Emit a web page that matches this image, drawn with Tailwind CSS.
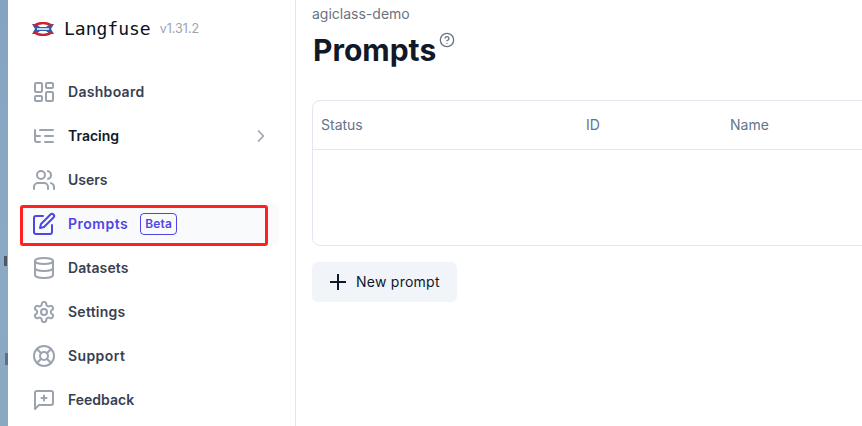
<!DOCTYPE html>
<html><head><meta charset="utf-8"><script src="https://cdn.jsdelivr.net/npm/@tailwindcss/browser@4"></script></head>
<body class="bg-white font-['Inter','Noto_Sans',sans-serif]">
<div class="flex w-[862px] h-[426px] overflow-hidden">
  <div class="relative w-[8px] shrink-0 bg-[linear-gradient(#84a5c2,#8aa9c4_60%,#8ba8c2)]">
    <span class="absolute left-[4px] top-[256px] w-[3px] h-[10px] bg-[#4d5566]"></span>
    <span class="absolute left-[5px] top-[353px] w-[3px] h-[12px] bg-[#5c7186]"></span>
  </div>
  <aside class="relative w-[288px] shrink-0 border-r border-[#e5e7eb] flex flex-col">
    <div class="flex items-center h-[58px] pl-[24px]">
      <svg class="w-[22px] h-[14px] mr-[10px]" viewBox="0 0 22 14"><path d="M0 2h4l4 3h6l4-3h4l-3 5 3 5h-4l-4-3H8l-4 3H0l3-5z" fill="#2b5fb3"/><path d="M2 4c5-4 13-4 18 0M2 10c5 4 13 4 18 0" fill="none" stroke="#c9252c" stroke-width="2.500"/><path d="M5 7h12" stroke="#fff" stroke-width="1.500"/></svg>
      <span class="font-['DejaVu_Sans_Mono',monospace] text-[18px] leading-none text-[#0b1220] font-medium">Langfuse</span>
      <span class="ml-[9px] text-[12.500px] text-[#9ca3af]">v1.31.2</span>
    </div>
    <nav class="mt-[12px] flex flex-col pl-[12px] pr-[16px] text-sm font-semibold leading-6 text-[#374151]">
      <a class="flex items-center h-[44px] gap-3 px-[12px] rounded-md">
        <svg class="w-6 h-6 text-[#9ca3af]" fill="none" viewBox="0 0 24 24" stroke-width="2" stroke="currentColor" stroke-linecap="round" stroke-linejoin="round"><rect width="7" height="9" x="3" y="3" rx="1"/><rect width="7" height="5" x="14" y="3" rx="1"/><rect width="7" height="9" x="14" y="12" rx="1"/><rect width="7" height="5" x="3" y="16" rx="1"/></svg>
        <span class="tracking-[0.3px]">Dashboard</span>
      </a>
      <a class="flex items-center h-[44px] gap-3 px-[12px] rounded-md text-[#111827]">
        <svg class="w-6 h-6 text-[#9ca3af]" fill="none" viewBox="0 0 24 24" stroke-width="2" stroke="currentColor" stroke-linecap="round" stroke-linejoin="round"><path d="M21 12h-8M21 6H8M21 18h-8M3 6v4c0 1.100.9 2 2 2h3M3 10v6c0 1.100.9 2 2 2h3"/></svg>
        <span>Tracing</span>
        <svg class="ml-auto w-5 h-5 text-[#9ca3af] mr-[-4px]" fill="none" viewBox="0 0 24 24" stroke-width="2" stroke="currentColor" stroke-linecap="round" stroke-linejoin="round"><path d="m9 18 6-6-6-6"/></svg>
      </a>
      <a class="flex items-center h-[44px] gap-3 px-[12px] rounded-md">
        <svg class="w-6 h-6 text-[#9ca3af]" fill="none" viewBox="0 0 24 24" stroke-width="2" stroke="currentColor" stroke-linecap="round" stroke-linejoin="round"><path d="M16 21v-2a4 4 0 0 0-4-4H6a4 4 0 0 0-4 4v2"/><circle cx="9" cy="7" r="4"/><path d="M22 21v-2a4 4 0 0 0-3-3.870M16 3.130a4 4 0 0 1 0 7.750"/></svg>
        <span>Users</span>
      </a>
      <a class="flex items-center h-[40px] my-[2px] gap-3 px-[12px] rounded-md bg-[#f9fafb] text-[#4f46e5]">
        <svg class="w-6 h-6 text-[#4f46e5]" fill="none" viewBox="0 0 24 24" stroke-width="2" stroke="currentColor" stroke-linecap="round" stroke-linejoin="round"><path d="M11 4H4a2 2 0 0 0-2 2v14a2 2 0 0 0 2 2h14a2 2 0 0 0 2-2v-7"/><path d="M18.500 2.500a2.121 2.121 0 0 1 3 3L12 15l-4 1 1-4 9.500-9.500z"/></svg>
        <span class="tracking-[0.5px]">Prompts</span>
        <span class="rounded-[4px] border border-[#4f46e5] px-[4px] h-[22px] flex items-center text-xs font-semibold tracking-[0.2px]">Beta</span>
      </a>
      <a class="flex items-center h-[44px] gap-3 px-[12px] rounded-md">
        <svg class="w-6 h-6 text-[#9ca3af]" fill="none" viewBox="0 0 24 24" stroke-width="2" stroke="currentColor" stroke-linecap="round" stroke-linejoin="round"><ellipse cx="12" cy="5" rx="9" ry="3"/><path d="M3 5v14c0 1.660 4 3 9 3s9-1.340 9-3V5"/><path d="M3 12c0 1.660 4 3 9 3s9-1.340 9-3"/></svg>
        <span class="tracking-[0.1px]">Datasets</span>
      </a>
      <a class="flex items-center h-[44px] gap-3 px-[12px] rounded-md">
        <svg class="w-6 h-6 text-[#9ca3af]" fill="none" viewBox="0 0 24 24" stroke-width="2" stroke="currentColor" stroke-linecap="round" stroke-linejoin="round"><path d="M12.220 2h-.44a2 2 0 0 0-2 2v.18a2 2 0 0 1-1 1.730l-.43.250a2 2 0 0 1-2 0l-.15-.080a2 2 0 0 0-2.730.730l-.22.380a2 2 0 0 0 .730 2.730l.150.100a2 2 0 0 1 1 1.720v.510a2 2 0 0 1-1 1.740l-.150.090a2 2 0 0 0-.730 2.730l.220.380a2 2 0 0 0 2.730.730l.150-.080a2 2 0 0 1 2 0l.430.250a2 2 0 0 1 1 1.730V20a2 2 0 0 0 2 2h.440a2 2 0 0 0 2-2v-.180a2 2 0 0 1 1-1.730l.430-.250a2 2 0 0 1 2 0l.150.080a2 2 0 0 0 2.730-.730l.220-.390a2 2 0 0 0-.730-2.730l-.150-.080a2 2 0 0 1-1-1.740v-.500a2 2 0 0 1 1-1.740l.150-.090a2 2 0 0 0 .730-2.730l-.220-.380a2 2 0 0 0-2.730-.730l-.150.080a2 2 0 0 1-2 0l-.430-.250a2 2 0 0 1-1-1.730V4a2 2 0 0 0-2-2z"/><circle cx="12" cy="12" r="3"/></svg>
        <span class="tracking-[0.25px]">Settings</span>
      </a>
      <a class="flex items-center h-[44px] gap-3 px-[12px] rounded-md">
        <svg class="w-6 h-6 text-[#9ca3af]" fill="none" viewBox="0 0 24 24" stroke-width="2" stroke="currentColor" stroke-linecap="round" stroke-linejoin="round"><circle cx="12" cy="12" r="10"/><circle cx="12" cy="12" r="4"/><path d="m4.930 4.930 4.240 4.240M14.830 9.170l4.240-4.240M14.830 14.830l4.240 4.240M9.170 14.830l-4.240 4.240"/></svg>
        <span class="tracking-[0.4px]">Support</span>
      </a>
      <a class="flex items-center h-[44px] gap-3 px-[12px] rounded-md">
        <svg class="w-6 h-6 text-[#9ca3af]" fill="none" viewBox="0 0 24 24" stroke-width="2" stroke="currentColor" stroke-linecap="round" stroke-linejoin="round"><path d="M21 15a2 2 0 0 1-2 2H7l-4 4V5a2 2 0 0 1 2-2h14a2 2 0 0 1 2 2z"/><path d="M14.500 10h-5M12 7.500v5"/></svg>
        <span>Feedback</span>
      </a>
    </nav>
    <div class="absolute left-[12px] top-[205px] w-[248px] h-[41px] border-[3px] border-[#ff2020] rounded-[3px]"></div>
  </aside>
  <main class="flex-1 min-w-0 pl-[16px]">
    <div class="text-sm leading-[28px] text-[#6b7280]">agiclass-demo</div>
    <div class="flex items-start h-[45px]">
      <h1 class="text-[30px] leading-[45px] font-bold text-[#111827] ml-[1px]">Prompts</h1>
      <svg class="ml-[3px] mt-[4px] w-4 h-4 text-[#6b7280]" fill="none" viewBox="0 0 24 24" stroke-width="2" stroke="currentColor" stroke-linecap="round" stroke-linejoin="round"><circle cx="12" cy="12" r="10"/><path d="M9.090 9a3 3 0 0 1 5.830 1c0 2-3 3-3 3M12 17h.01"/></svg>
    </div>
    <div class="mt-[27px] w-[600px] h-[146px] rounded-lg border border-[#e2e8f0]">
      <div class="flex items-center h-[49px] border-b border-[#e2e8f0] text-sm text-[#64748b]">
        <span class="pl-[8px] w-[273px]">Status</span>
        <span class="w-[144px]">ID</span>
        <span>Name</span>
      </div>
    </div>
    <button class="mt-[16px] flex items-center h-[40px] w-[145px] rounded-md bg-[#f1f5f9] pl-[14px] text-sm text-[#0f172a]">
      <svg class="w-6 h-6 mr-[6px]" fill="none" viewBox="0 0 24 24" stroke-width="2" stroke="currentColor"><path d="M12 4v16M4 12h16"/></svg>
      <span class="tracking-[0.25px]">New prompt</span>
    </button>
  </main>
</div>
</body></html>
